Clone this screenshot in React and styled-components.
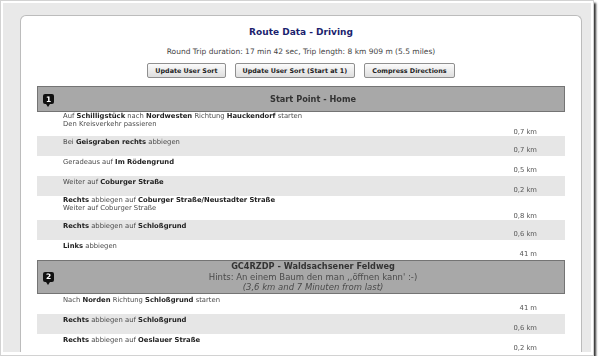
import React from 'react';
import styled, { createGlobalStyle } from 'styled-components';

const GlobalStyle = createGlobalStyle`
  html, body {
    margin: 0;
    padding: 0;
    background: #fff;
  }
  body {
    font-family: "DejaVu Sans", Verdana, sans-serif;
    color: #333;
  }
`;

const Frame = styled.div`
  box-sizing: border-box;
  width: 594px;
  height: 356px;
  padding: 2px 2px 3px 2px;
  background: #fff;
  border: 1px solid #d2d2d2;
  box-shadow: 2px 3px 2px rgba(0, 0, 0, 0.8);
`;

const Viewport = styled.div`
  box-sizing: border-box;
  height: 100%;
  padding: 12px 9px 0 17px;
  background: #e9e9e9;
  overflow: hidden;
`;

const Card = styled.div`
  min-height: 400px;
  padding: 10px 16px 20px;
  background: #fff;
  border: 1px solid #bcbcbc;
  border-bottom: none;
  border-radius: 6px 6px 0 0;
`;

const Title = styled.h2`
  margin: 0;
  font-size: 9px;
  line-height: 12px;
  font-weight: bold;
  text-align: center;
  color: #1c1f6e;
`;

const Summary = styled.p`
  margin: 9px 0 0;
  font-size: 7.5px;
  line-height: 9px;
  text-align: center;
  color: #444;
`;

const Toolbar = styled.div`
  display: flex;
  justify-content: center;
  gap: 9px;
  margin-top: 7px;
`;

const Button = styled.button`
  box-sizing: border-box;
  height: 15px;
  padding: 0 7px;
  font-family: inherit;
  font-size: 6.4px;
  font-weight: bold;
  color: #222;
  background: linear-gradient(#fbfbfb, #dedede);
  border: 1px solid #8f8f8f;
  border-radius: 2px;
`;

const Directions = styled.div`
  margin-top: 8px;
  filter: grayscale(1);
`;

const Stop = styled.div`
  display: flex;
  align-items: center;
  min-height: 24px;
  background: #a8a8a8;
  border: 1px solid #747474;
`;

const MarkerCell = styled.div`
  width: 24px;
  padding-left: 5px;
  box-sizing: border-box;
`;

const Marker = styled.span`
  position: relative;
  display: flex;
  align-items: center;
  justify-content: center;
  width: 11px;
  height: 10px;
  background: #111;
  border-radius: 2px;
  color: #fff;
  font-size: 7.5px;
  font-weight: bold;

  &::after {
    content: '';
    position: absolute;
    left: 3px;
    bottom: -3px;
    border-left: 2.5px solid transparent;
    border-right: 2.5px solid transparent;
    border-top: 3px solid #111;
  }
`;

const StopText = styled.div`
  flex: 1;
  text-align: center;
  font-size: 8.5px;
  line-height: 10.5px;
  color: #4a4a4a;
`;

const StopName = styled.div`
  font-size: 8.2px;
  font-weight: bold;
  color: #333;
`;

const StopNote = styled.div`
  font-style: ${(p) => (p.$italic ? 'italic' : 'normal')};
`;

const Step = styled.div`
  display: flex;
  flex-direction: column;
  justify-content: center;
  min-height: 20px;
  padding: 0 28px 0 26px;
  background: ${(p) => (p.$shade ? '#e6e6e6' : '#fff')};
`;

const Instruction = styled.div`
  font-size: 6.8px;
  line-height: 8px;
  color: #4a4a4a;

  b {
    color: #222;
  }
`;

const Note = styled.div`
  font-size: 6.8px;
  line-height: 8px;
  color: #4a4a4a;
`;

const Distance = styled.div`
  font-size: 6.8px;
  line-height: 8px;
  text-align: right;
  color: #555;
`;

const firstLeg = [
  {
    text: <>Auf <b>Schilligstück</b> nach <b>Nordwesten</b> Richtung <b>Hauckendorf</b> starten</>,
    note: 'Den Kreisverkehr passieren',
    distance: '0,7 km',
  },
  { text: <>Bei <b>Geisgraben rechts</b> abbiegen</>, distance: '0,7 km' },
  { text: <>Geradeaus auf <b>Im Rödengrund</b></>, distance: '0,5 km' },
  { text: <>Weiter auf <b>Coburger Straße</b></>, distance: '0,2 km' },
  {
    text: <><b>Rechts</b> abbiegen auf <b>Coburger Straße/Neustadter Straße</b></>,
    note: 'Weiter auf Coburger Straße',
    distance: '0,8 km',
  },
  { text: <><b>Rechts</b> abbiegen auf <b>Schloßgrund</b></>, distance: '0,6 km' },
  { text: <><b>Links</b> abbiegen</>, distance: '41 m' },
];

const secondLeg = [
  { text: <>Nach <b>Norden</b> Richtung <b>Schloßgrund</b> starten</>, distance: '41 m' },
  { text: <><b>Rechts</b> abbiegen auf <b>Schloßgrund</b></>, distance: '0,6 km' },
  { text: <><b>Rechts</b> abbiegen auf <b>Oeslauer Straße</b></>, distance: '0,2 km' },
];

const Steps = ({ steps }) =>
  steps.map((step, i) => (
    <Step key={i} $shade={i % 2 === 1}>
      <Instruction>{step.text}</Instruction>
      {step.note && <Note>{step.note}</Note>}
      <Distance>{step.distance}</Distance>
    </Step>
  ));

const App = () => (
  <>
    <GlobalStyle />
    <Frame>
      <Viewport>
        <Card>
          <Title>Route Data - Driving</Title>
          <Summary>Round Trip duration: 17 min 42 sec, Trip length: 8 km 909 m (5.5 miles)</Summary>
          <Toolbar>
            <Button>Update User Sort</Button>
            <Button>Update User Sort (Start at 1)</Button>
            <Button>Compress Directions</Button>
          </Toolbar>
          <Directions>
            <Stop>
              <MarkerCell><Marker>1</Marker></MarkerCell>
              <StopText>
                <StopName>Start Point - Home</StopName>
              </StopText>
            </Stop>
            <Steps steps={firstLeg} />
            <Stop>
              <MarkerCell><Marker>2</Marker></MarkerCell>
              <StopText>
                <StopName>GC4RZDP - Waldsachsener Feldweg</StopName>
                <StopNote>Hints: An einem Baum den man ,,öffnen kann' :-)</StopNote>
                <StopNote $italic>(3,6 km and 7 Minuten from last)</StopNote>
              </StopText>
            </Stop>
            <Steps steps={secondLeg} />
          </Directions>
        </Card>
      </Viewport>
    </Frame>
  </>
);

export default App;
